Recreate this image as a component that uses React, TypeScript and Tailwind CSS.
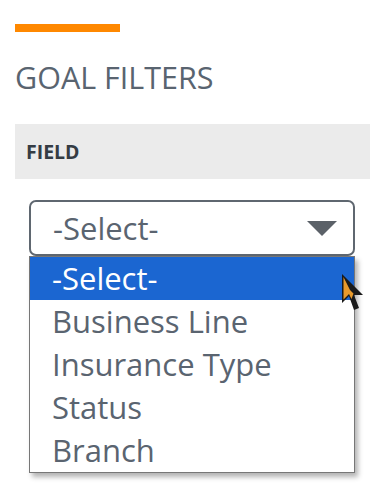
import React from 'react';

const options = ['-Select-', 'Business Line', 'Insurance Type', 'Status', 'Branch'];

const Cursor: React.FC = () => (
  <svg
    className="absolute left-[341px] top-[273px]"
    width="26"
    height="40"
    viewBox="0 0 26 40"
  >
    <polygon points="1,1 1,30 8,23 13,37 18,35 13,22 22,22" fill="#1a1a1a" />
    <polygon points="2.5,4 2.5,26.5 8,21 10.5,26 12.5,20.5 9,17" fill="#e89a2c" />
  </svg>
);

const App: React.FC = () => {
  return (
    <div className="relative w-[370px] h-[484px] bg-white overflow-hidden font-['Open_Sans',sans-serif]">
      <div className="pl-[15px] pt-[24px]">
        <div className="w-[105px] h-[8px] bg-[#ff8800]" />
        <h2 className="mt-[24px] text-[30.5px] leading-[42px] text-[#596470]">
          GOAL FILTERS
        </h2>
        <div className="mt-[26px] h-[55px] bg-[#ebebeb] flex items-center pl-[11px]">
          <span className="text-[19.5px] font-bold text-[#353c44]">FIELD</span>
        </div>

        <div className="ml-[14px] mt-[21px] w-[326px]">
          <div className="h-[56px] border-2 border-[#5f6770] rounded-[7px] flex items-center justify-between pl-[22px] pr-[16px]">
            <span className="text-[31px] text-[#5a6470] leading-none">-Select-</span>
            <svg width="30" height="15" viewBox="0 0 30 15">
              <polygon points="0,0 30,0 15,15" fill="#5b6168" />
            </svg>
          </div>
          <ul className="border border-[#777] bg-white shadow-[3px_4px_5px_rgba(0,0,0,0.3)]">
            {options.map((o, i) => (
              <li
                key={o}
                className={`h-[43px] flex items-center pl-[22px] text-[31px] leading-none ${
                  i === 0 ? 'bg-[#1b66d1] text-white' : 'text-[#5a6470]'
                }`}
              >
                {o}
              </li>
            ))}
          </ul>
        </div>
      </div>
      <Cursor />
    </div>
  );
};

export default App;
